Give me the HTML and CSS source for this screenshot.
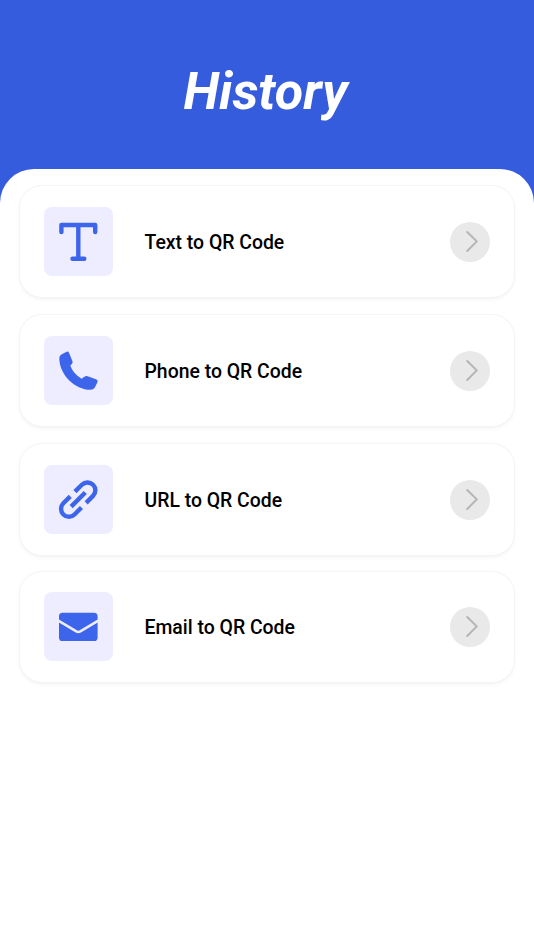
FILE: index.html
```
<!DOCTYPE html>
<html lang="en">
<head>
    <meta charset="UTF-8">
    <meta name="viewport" content="width=device-width, initial-scale=1.0">
    <title>History</title>
    <link rel="stylesheet" href="styles.css">
</head>
<body>
    <header class="header">
        <h1>History</h1>
    </header>
    <main class="sheet">
        <a class="card">
            <svg class="icon" viewBox="0 0 69 69">
                <path class="line" d="M17.4 25V18H51.2V25M34.3 18V51.7M28.5 51.7H40.3"/>
            </svg>
            <span class="label">Text to QR Code</span>
            <svg class="arrow" viewBox="0 0 40 40"><path d="M17.2 10L26.8 19.4L17.2 29"/></svg>
        </a>
        <a class="card">
            <svg class="icon" viewBox="0 0 69 69">
                <path class="fill" d="M17.4 18.4L22.2 15.9Q24.3 15 25.1 17L28.5 25.2Q29 26.8 27.9 28L26.3 29.6C28 34.5 32 39.5 37.6 42.7L40.7 40.6Q42 39.8 43.6 40.3L52 43.2Q54.2 44 53.5 46L51 51.2Q49.9 53.6 47 53.8C31 54 15.3 39 15.3 22Q15.4 19.5 17.4 18.4Z"/>
            </svg>
            <span class="label">Phone to QR Code</span>
            <svg class="arrow" viewBox="0 0 40 40"><path d="M17.2 10L26.8 19.4L17.2 29"/></svg>
        </a>
        <a class="card">
            <svg class="icon" viewBox="0 0 69 69">
                <g transform="translate(34.2 34.6) rotate(-45)">
                    <path class="line flat" d="M3.3 -7.9H13.1A7.9 7.9 0 0 1 13.1 7.9H3.3M-3.3 -7.9H-13.1A7.9 7.9 0 0 0 -13.1 7.9H-3.3M-10 0H10"/>
                </g>
            </svg>
            <span class="label">URL to QR Code</span>
            <svg class="arrow" viewBox="0 0 40 40"><path d="M17.2 10L26.8 19.4L17.2 29"/></svg>
        </a>
        <a class="card last">
            <svg class="icon" viewBox="0 0 69 69">
                <rect class="fill" x="15" y="20.8" width="38.6" height="28.2" rx="3.6"/>
                <path class="flap" d="M14.3 28.7L32.3 39.4Q34.3 40.5 36.3 39.4L54.3 28.7"/>
            </svg>
            <span class="label">Email to QR Code</span>
            <svg class="arrow" viewBox="0 0 40 40"><path d="M17.2 10L26.8 19.4L17.2 29"/></svg>
        </a>
    </main>
</body>
</html>
```

FILE: styles.css
```
* {
    box-sizing: border-box;
}
body {
    margin: 0;
    min-height: 950px;
    background-color: #355cdd;
    font-family: Roboto, sans-serif;
}
.header {
    height: 169px;
    padding: 61px 3px 0 0;
    text-align: center;
}
.header h1 {
    margin: 0;
    color: #fff;
    font-size: 52px;
    font-style: italic;
    font-weight: 700;
    line-height: 62px;
}
.sheet {
    height: 781px;
    padding: 17px 20px 0;
    background-color: #fff;
    border-radius: 34px 34px 0 0;
}
.card {
    display: flex;
    align-items: center;
    height: 111px;
    margin-bottom: 18px;
    padding: 0 24px;
    background-color: #fff;
    border-radius: 22px;
    box-shadow: 0 0 1px 1px #f4f4f4, 0 2px 4px rgba(0, 0, 0, 0.06);
}
.card.last {
    height: 110px;
    margin-top: -1.3px;
}
.icon {
    width: 69px;
    height: 69px;
    background-color: #eeecff;
    border-radius: 8px;
}
.fill {
    fill: #3d65eb;
}
.line {
    fill: none;
    stroke: #3d65eb;
    stroke-width: 4.4;
    stroke-linecap: round;
    stroke-linejoin: round;
}
.line.flat {
    stroke-linecap: butt;
}
.flap {
    fill: none;
    stroke: #eeecff;
    stroke-width: 2.6;
}
.label {
    flex: 1;
    margin-left: 31.5px;
    padding-top: 2px;
    color: #000;
    font-size: 19.4px;
    font-weight: 500;
}
.arrow {
    width: 40px;
    height: 40px;
    background-color: #e9e9e9;
    border-radius: 50%;
}
.arrow path {
    fill: none;
    stroke: #b5b5b5;
    stroke-width: 2;
    stroke-linecap: round;
    stroke-linejoin: round;
}
```
